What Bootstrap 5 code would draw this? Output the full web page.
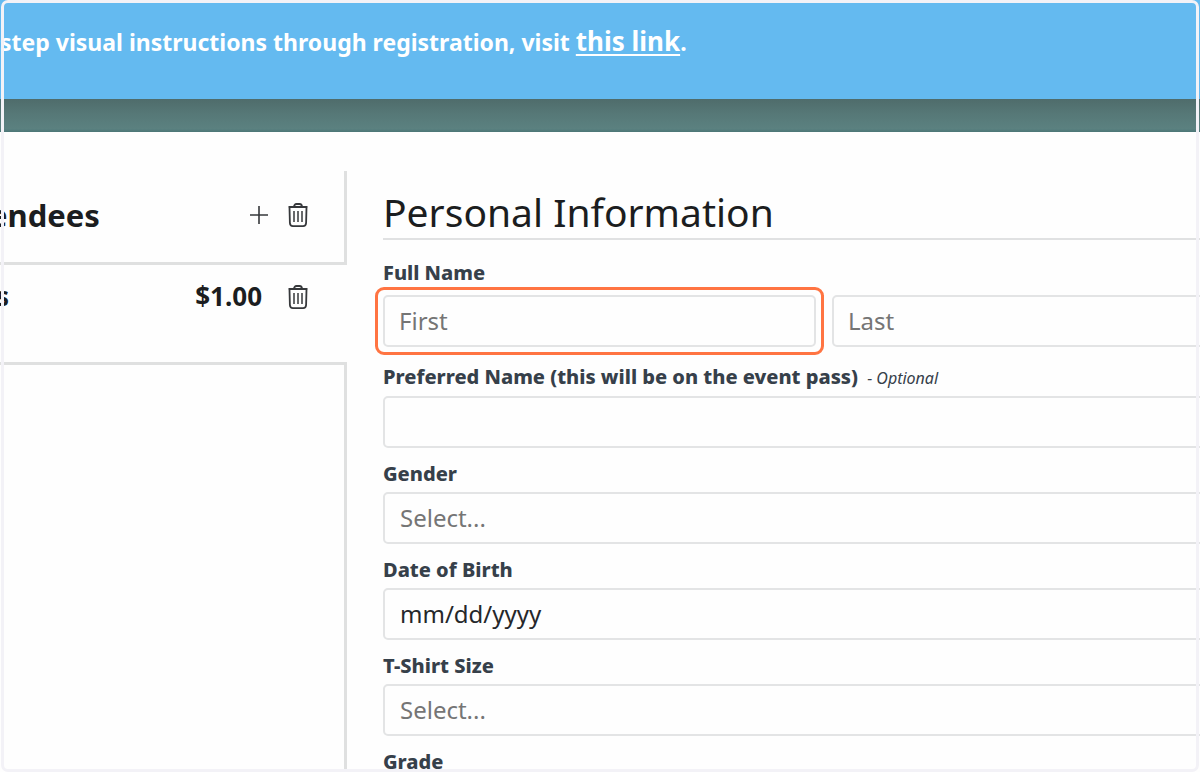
<!DOCTYPE html>
<html lang="en">
<head>
<meta charset="utf-8">
<meta name="viewport" content="width=device-width, initial-scale=1">
<title>Event Registration</title>
<link href="https://cdn.jsdelivr.net/npm/bootstrap@5.3.0/dist/css/bootstrap.min.css" rel="stylesheet">
<style>
  body { font-family: "Noto Sans", sans-serif; color: #1b1d20; background: #fefefe; }
  /* rounded frame over the whole window */
  .page-frame { position: fixed; inset: 0 1px; border: 3px solid #f3f2f7; border-radius: 7px; pointer-events: none; z-index: 10; }
  .notice { background: #64baf0; color: #fff; font-size: 23px; line-height: 32px; height: 99px; padding-top: 25px; }
  .notice a { color: #fff; font-size: 26px; text-decoration-thickness: 2px; text-underline-offset: 3px; text-decoration-skip-ink: none; }
  .hero-strip { height: 33px; background: linear-gradient(#4f6c6b, #567877 45%, #5b8180 90%, #4c7677); }
  .side-panel { width: 347px; margin-top: 39px; --line: 3px solid #dfe0e0; }
  .side-head { height: 94px; padding: 0 36px 4px 0; border-right: var(--line); border-bottom: var(--line); }
  .side-item { height: 97px; padding: 15px 39px 0 0; }
  .side-rest { border-right: var(--line); border-top: var(--line); }
  .side-title { font-size: 31px; line-height: 40px; margin-left: -11px; }
  .side-name { font-size: 26px; line-height: 32px; margin-left: -4px; }
  .side-price { font-size: 26px; line-height: 32px; margin-right: 26px; }
  .icon-btn { color: #36383b; line-height: 0; }
  .form-area { padding: 56px 0 0 36px; margin-right: -65px; }
  .form-area h1 { font-size: 39px; line-height: 48px; font-weight: 400; padding-bottom: 2px; margin-bottom: 21px; border-bottom: 2px solid #e0e1e2; }
  .form-area .form-label { display: block; color: #36404a; font-size: 20px; line-height: 24px; font-weight: 800; margin-bottom: 6px; }
  .form-area .name-label { margin-bottom: 10px; }
  .field { margin-bottom: 14px; }
  .name-row { margin-bottom: 18px; }
  .optional { font-size: 16px; font-weight: 400; }
  .form-area .form-control, .form-area .form-select { height: 52px; font-size: 24px; line-height: 32px; padding: 8px 15px; border: 2px solid #e3e4e5; border-radius: 5px; color: #25272a; background-color: #fefefe; }
  .form-area .form-select, .form-area .form-control::placeholder { color: #757575; }
  .form-area .name-row .form-control { padding: 7px 14px 9px; }
  .spotlight::after { content: ""; position: absolute; inset: -8px; border: 3px solid #ff7442; border-radius: 9px; pointer-events: none; }
</style>
</head>
<body>
<div class="vh-100 overflow-hidden d-flex flex-column">
  <header class="notice flex-shrink-0 fw-bold text-nowrap">step visual instructions through registration, visit <a href="#">this link</a>.</header>
  <div class="hero-strip flex-shrink-0"></div>
  <div class="d-flex flex-grow-1">
    <aside class="side-panel flex-shrink-0 d-flex flex-column">
      <div class="side-head d-flex align-items-center">
        <h2 class="side-title fw-bold mb-0 me-auto">endees</h2>
        <button type="button" class="icon-btn btn p-0 border-0 me-3" aria-label="Add attendee">
          <svg width="26" height="26" viewBox="0 0 26 26" fill="none" stroke="currentColor" stroke-width="1.600"><path d="M13 4v18M4 13h18"/></svg>
        </button>
        <button type="button" class="icon-btn btn p-0 border-0" aria-label="Remove all">
          <svg width="20" height="26" viewBox="0 0 20 26" fill="none" stroke="currentColor"><path stroke-width="1.800" d="M.5 5h19M6 5c0-2 1-3 2.500-3h3c1.500 0 2.500 1 2.500 3M1.500 5.500l.4 15.500q.2 3.200 3 3.200h10.200q2.800 0 3-3.200l.4-15.500"/><path stroke-width="1.500" d="M6 9v11M10 9v11M14 9v11"/></svg>
        </button>
      </div>
      <div class="side-item d-flex align-items-start">
        <span class="side-name fw-bold me-auto">s</span>
        <span class="side-price fw-bold">$1.00</span>
        <button type="button" class="icon-btn btn p-0 border-0 mt-1" aria-label="Remove attendee">
          <svg width="20" height="26" viewBox="0 0 20 26" fill="none" stroke="currentColor"><path stroke-width="1.800" d="M.5 5h19M6 5c0-2 1-3 2.500-3h3c1.500 0 2.500 1 2.500 3M1.500 5.500l.4 15.500q.2 3.200 3 3.200h10.200q2.800 0 3-3.200l.4-15.500"/><path stroke-width="1.500" d="M6 9v11M10 9v11M14 9v11"/></svg>
        </button>
      </div>
      <div class="side-rest flex-grow-1"></div>
    </aside>
    <main class="form-area flex-grow-1">
      <form>
        <h1>Personal Information</h1>
        <label class="form-label name-label" for="first">Full Name</label>
        <div class="name-row d-flex gap-3">
          <div class="spotlight position-relative flex-fill"><input id="first" class="form-control" type="text" placeholder="First"></div>
          <div class="flex-fill"><input id="last" class="form-control" type="text" placeholder="Last" aria-label="Last name"></div>
        </div>
        <div class="field">
          <label class="form-label" for="preferred">Preferred Name (this will be on the event pass) <em class="optional ms-1">- Optional</em></label>
          <input id="preferred" class="form-control" type="text">
        </div>
        <div class="field">
          <label class="form-label" for="gender">Gender</label>
          <select id="gender" class="form-select"><option>Select...</option></select>
        </div>
        <div class="field">
          <label class="form-label" for="dob">Date of Birth</label>
          <input id="dob" class="form-control" type="date">
        </div>
        <div class="field">
          <label class="form-label" for="shirt">T-Shirt Size</label>
          <select id="shirt" class="form-select"><option>Select...</option></select>
        </div>
        <div class="field">
          <label class="form-label" for="grade">Grade</label>
          <select id="grade" class="form-select"><option>Select...</option></select>
        </div>
      </form>
    </main>
  </div>
</div>
<div class="page-frame"></div>
<script src="https://cdn.jsdelivr.net/npm/bootstrap@5.3.0/dist/js/bootstrap.bundle.min.js"></script>
</body>
</html>
